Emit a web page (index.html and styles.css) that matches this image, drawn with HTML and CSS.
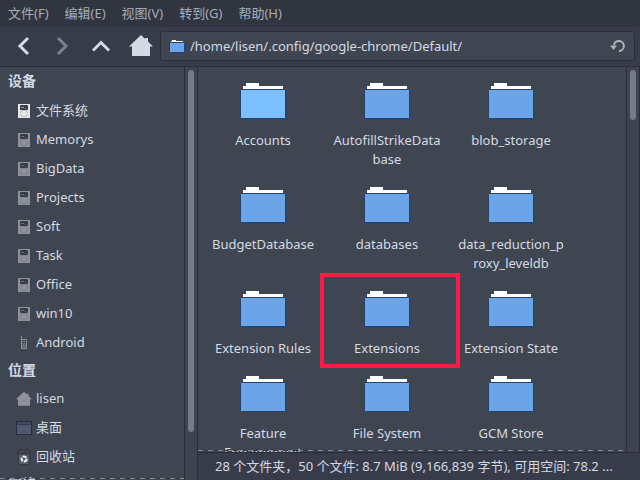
FILE: index.html
```html
<!DOCTYPE html>
<html lang="zh-CN">
<head>
<meta charset="utf-8">
<title>Default</title>
<link rel="stylesheet" href="styles.css">
</head>
<body>
<svg class="defs" aria-hidden="true">
  <symbol id="folder" viewBox="0 0 46 36">
    <path d="M3 8V3H6V0H19V3H43V8Z" fill="#fff"/>
    <rect x=".5" y="6.500" width="45" height="29" rx="1" fill="currentColor" stroke="#1f4173"/>
  </symbol>
  <symbol id="drive" viewBox="0 0 16 16">
    <path d="M2 1H14V15H2Z" fill="currentColor"/>
    <rect x="4" y="2" width="8" height="5" rx="1" fill="#353a47"/>
    <path d="M5 4.500H8M9 5.500H10" stroke="currentColor" opacity=".6"/>
    <circle cx="8" cy="10.500" r="3.500" fill="none" stroke="#404552" opacity=".25"/>
  </symbol>
  <symbol id="home" viewBox="0 0 24 22">
    <path d="M12 0 16 4V3H19V6.500L24 11.500H21V21H3V11.500H0Z" fill="currentColor"/>
  </symbol>
</svg>
<div class="window">
  <nav class="menubar">
    <button>文件(F)</button><button>编辑(E)</button><button>视图(V)</button><button>转到(G)</button><button>帮助(H)</button>
  </nav>
  <header class="toolbar">
    <button class="tool" aria-label="后退"><svg width="20" height="20" viewBox="0 0 20 20"><path d="M14 2 6 10 14 18"/></svg></button>
    <button class="tool disabled" aria-label="前进"><svg width="20" height="20" viewBox="0 0 20 20"><path d="M5 2 13 10 5 18"/></svg></button>
    <button class="tool" aria-label="上级"><svg width="20" height="20" viewBox="0 0 20 20"><path d="M1 14.500 9 6.500 17 14.500"/></svg></button>
    <button class="tool" aria-label="主目录"><svg class="house" width="24" height="22"><use href="#home"/></svg></button>
    <div class="location">
      <svg class="folder-small" width="16" height="13" viewBox="0 0 16 13"><path d="M2 4V1H3V0H7V1H14V4Z" fill="#fff"/><rect x=".5" y="2.500" width="15" height="10" rx="1" fill="#6ba4e7" stroke="#1f4173"/></svg>
      <input type="text" aria-label="路径" value="/home/lisen/.config/google-chrome/Default/">
      <button class="reload" aria-label="重新载入"><svg width="16" height="16" viewBox="0 0 16 16"><path d="M4 7A5 5 0 1 1 9 13" fill="none" stroke="currentColor" stroke-width="2"/><path d="M0 7.500H7L3.500 12Z" fill="currentColor"/></svg></button>
    </div>
  </header>
  <div class="body">
    <aside class="sidebar">
      <div class="places">
        <h2>设备</h2>
        <ul>
          <li><a href="#"><svg class="bright"><use href="#drive"/></svg>文件系统</a></li>
          <li><a href="#"><svg><use href="#drive"/></svg>Memorys</a></li>
          <li><a href="#"><svg><use href="#drive"/></svg>BigData</a></li>
          <li><a href="#"><svg><use href="#drive"/></svg>Projects</a></li>
          <li><a href="#"><svg><use href="#drive"/></svg>Soft</a></li>
          <li><a href="#"><svg><use href="#drive"/></svg>Task</a></li>
          <li><a href="#"><svg><use href="#drive"/></svg>Office</a></li>
          <li><a href="#"><svg><use href="#drive"/></svg>win10</a></li>
          <li><a href="#"><svg viewBox="0 0 16 16"><path d="M5.500 1V13.500H10.500V4.500H5.500" fill="none" stroke="#8b8e97"/><path d="M7 6.500H9" stroke="#8b8e97"/><path d="M6.500 8V13M8.500 8V13" stroke="#8b8e97" stroke-dasharray="1 1"/><path d="M7.500 9V13M9.500 9V13" stroke="#8b8e97" stroke-dasharray="1 1"/></svg>Android</a></li>
        </ul>
        <h2>位置</h2>
        <ul>
          <li><a href="#"><svg><use href="#home"/></svg>lisen</a></li>
          <li><a href="#"><svg viewBox="0 0 16 16"><rect x=".5" y="1.500" width="15" height="13" fill="#505870" stroke="#2b2e3a"/><path d="M1 3H15" stroke="#454b5e" stroke-width="2"/><path d="M1 4.500H15" stroke="#353a48"/></svg>桌面</a></li>
          <li><a href="#"><svg viewBox="0 0 16 16"><path d="M2 4H14L13 15.500H3Z" fill="#555b67" stroke="#343944"/><path d="M1.500 5V3L3 .5H13L14.500 3V5Z" fill="#41444b" stroke="#303238"/><circle cx="8" cy="10" r="2.500" fill="none" stroke="#f2f3f5" stroke-width="2" stroke-dasharray="4 1"/></svg>回收站</a></li>
        </ul>
        <h2>网络</h2>
      </div>
      <div class="track"><div class="thumb long"></div></div>
    </aside>
    <main class="pane">
      <div class="view">
        <div class="files">
          <ul class="grid">
            <li class="hover"><svg><use href="#folder"/></svg><span>Accounts</span></li>
            <li><svg><use href="#folder"/></svg><span>AutofillStrikeData<br>base</span></li>
            <li><svg><use href="#folder"/></svg><span>blob_storage</span></li>
            <li><svg><use href="#folder"/></svg><span>BudgetDatabase</span></li>
            <li><svg><use href="#folder"/></svg><span>databases</span></li>
            <li><svg><use href="#folder"/></svg><span>data_reduction_p<br>roxy_leveldb</span></li>
            <li><svg><use href="#folder"/></svg><span>Extension Rules</span></li>
            <li class="marked"><svg><use href="#folder"/></svg><span>Extensions</span></li>
            <li><svg><use href="#folder"/></svg><span>Extension State</span></li>
            <li><svg><use href="#folder"/></svg><span>Feature<br>Engagement</span></li>
            <li><svg><use href="#folder"/></svg><span>File System</span></li>
            <li><svg><use href="#folder"/></svg><span>GCM Store</span></li>
          </ul>
        </div>
        <div class="track"><div class="thumb short"></div></div>
      </div>
      <footer class="status">28 个文件夹，50 个文件: 8.7 MiB (9,166,839 字节), 可用空间: 78.2 ...</footer>
    </main>
  </div>
</div>
</body>
</html>
```
FILE: styles.css
```css
* { box-sizing: border-box; }
body {
  margin: 0;
  background: #383c4a;
  color: #d3dae3;
  font: 13px/19px "Noto Sans", "Noto Sans CJK SC", sans-serif;
}
button, input {
  margin: 0;
  padding: 0;
  border: 0;
  background: none;
  color: inherit;
  font: inherit;
}
ul { list-style: none; margin: 0; padding: 0; }
svg { display: block; flex: none; }
.defs { display: none; }
.window { display: flex; flex-direction: column; height: 100vh; overflow: hidden; }

.menubar {
  display: flex;
  flex: none;
  gap: 16px;
  height: 27px;
  padding: 0 8px;
  background: #31353f;
  color: #a5acb9;
}

.toolbar {
  display: flex;
  flex: none;
  align-items: center;
  height: 40px;
  padding: 0 5px 1px 4px;
  border-bottom: 1px solid #2b2e3a;
}
.tool {
  display: grid;
  place-items: center;
  width: 39px;
  height: 32px;
  color: #d3dae3;
}
.tool path { fill: none; stroke: currentColor; stroke-width: 3; }
.tool.disabled { color: #7c818c; }
.location {
  display: flex;
  flex: 1;
  align-items: center;
  gap: 5px;
  height: 30px;
  padding: 0 8px;
  border: 1px solid #2b2e3a;
  border-radius: 3px;
  background: #404552;
}
.location input { flex: 1; min-width: 0; }
.reload { color: #afb4bf; }

.body { display: flex; flex: 1; min-height: 0; background: #404552; }
.sidebar { display: flex; flex: none; width: 197px; }
.places {
  position: relative;
  flex: 1;
  overflow: hidden;
}
.places::after, .files::after {
  content: "";
  position: absolute;
  left: 0;
  right: 0;
  bottom: 1px;
  height: 1px;
  background: repeating-linear-gradient(90deg, #868a94 0 5px, #353945 5px 10px);
}
.places h2 {
  margin: 0;
  padding: 3px 8px 5px;
  font-size: 14px;
  font-weight: bold;
  line-height: 19px;
}
.places h2:first-child { padding: 4px 8px 6px; }
.places a {
  display: flex;
  align-items: center;
  gap: 4px;
  height: 29px;
  padding-left: 16px;
  color: inherit;
  text-decoration: none;
}
.places a svg { width: 16px; height: 16px; color: #8f929b; }
.places a .bright { color: #e8e8e8; }

.track {
  flex: none;
  width: 13px;
  padding: 3px;
  border-left: 1px solid #2b2e3a;
  background: #3e434f;
}
.thumb { width: 6px; border-radius: 3px; background: #767b87; }
.long { height: 89%; }
.short { height: 50px; }

.pane {
  display: flex;
  flex: 1;
  flex-direction: column;
  min-width: 0;
  border-left: 1px solid #2b2e3a;
}
.view {
  display: flex;
  flex: 1;
  min-height: 0;
  border-right: 1px solid #2b2e3a;
}
.files { position: relative; flex: 1; overflow: hidden; }
.grid {
  display: grid;
  grid-template-columns: repeat(auto-fill, 112px);
  gap: 18px 12px;
  padding: 16px 9px;
}
.grid li {
  display: flex;
  position: relative;
  flex-direction: column;
  align-items: center;
  gap: 12px;
  color: #6ba4e7;
}
.grid .hover { color: #7dc0ff; }
.grid svg { width: 46px; height: 36px; }
.grid span { color: #d3dae3; text-align: center; }
.marked::after {
  content: "";
  position: absolute;
  inset: -18px -17px -10px -11px;
  border: 4px solid #ff1a46;
}

.status {
  flex: none;
  height: 28px;
  padding: 4px 17px;
  overflow: hidden;
  border-top: 1px solid #2b2e3a;
  background: #383c4a;
  white-space: nowrap;
}
```
